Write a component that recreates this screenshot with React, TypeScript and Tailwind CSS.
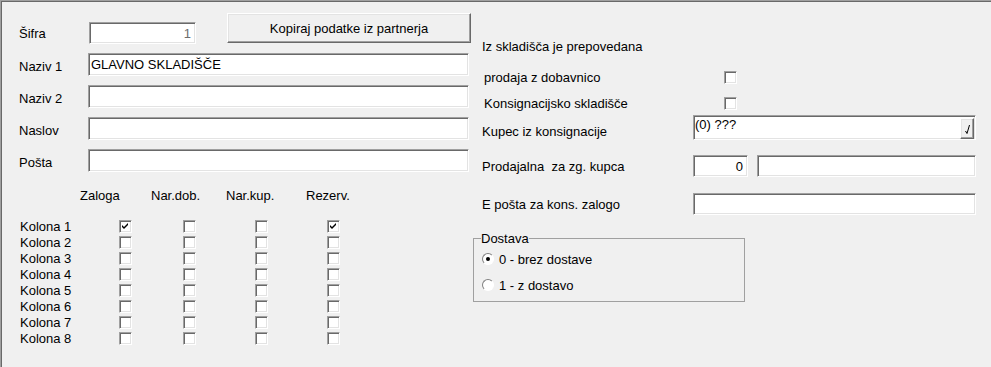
import type { ReactNode } from "react";

const sunken =
	"bg-white border border-t-[#a0a0a0] border-l-[#a0a0a0] border-b-white border-r-white shadow-[inset_1px_1px_0_#696969,inset_-1px_-1px_0_#e3e3e3]";
const raised =
	"bg-[#f0f0f0] border border-t-white border-l-white border-b-[#696969] border-r-[#696969] shadow-[inset_-1px_-1px_0_#a0a0a0,inset_1px_1px_0_#e3e3e3]";

const Check = ({ checked = false }: { checked?: boolean }) => (
	<span className={`${sunken} flex h-[13px] w-[13px] items-center justify-center`}>
		{checked ? (
			<svg width="9" height="9" viewBox="0 0 9 9">
				<path d="M1 3 L3 5 L7 1 L7 3 L3 7 L1 5 Z" fill="#000" />
			</svg>
		) : null}
	</span>
);

const Radio = ({ checked = false }: { checked?: boolean }) => (
	<span className="flex h-[12px] w-[12px] items-center justify-center rounded-full border border-t-[#808080] border-l-[#808080] border-b-white border-r-white bg-white">
		{checked ? <span className="h-[4px] w-[4px] rounded-full bg-black" /> : null}
	</span>
);

const Box = ({ className, children }: { className: string; children?: ReactNode }) => (
	<div className={`${sunken} flex items-center px-[2px] ${className}`}>{children}</div>
);

const kolone = [1, 2, 3, 4, 5, 6, 7, 8];

export default function App() {
	return (
		<div className="flex h-[367px] w-[991px] overflow-hidden border-t border-l border-[#a0a0a0] bg-[#f0f0f0] font-['Liberation_Sans',Arial,sans-serif] text-[13px] leading-[15px] text-black shadow-[inset_1px_1px_0_#696969]">
			{/* levi del */}
			<div className="flex w-[472px] shrink-0 flex-col pl-[18px] pt-[12px]">
				<div className="flex h-[31px]">
					<span className="mb-[3px] w-[70px] self-end">Šifra</span>
					<Box className="h-[22px] w-[107px] justify-end self-end pr-[4px] text-[#6d6d6d]">1</Box>
					<button className={`${raised} ml-[31px] h-[30px] w-[244px] text-center`}>
						Kopiraj podatke iz partnerja
					</button>
				</div>

				{[
					["Naziv 1", "GLAVNO SKLADIŠČE"],
					["Naziv 2", ""],
					["Naslov", ""],
					["Pošta", ""],
				].map(([label, value]) => (
					<div key={label} className="mt-[9px] flex items-center">
						<span className="w-[69px] pt-[3px]">{label}</span>
						<Box className="h-[23px] w-[381px]">{value}</Box>
					</div>
				))}

				<div className="mt-[16px] grid h-[15px] grid-cols-[71px_75px_80px_auto] pl-[61px]">
					<span>Zaloga</span>
					<span>Nar.dob.</span>
					<span>Nar.kup.</span>
					<span>Rezerv.</span>
				</div>

				<div className="mt-[15px] flex flex-col">
					{kolone.map((n) => (
						<div key={n} className="grid h-[16px] grid-cols-[100px_64px_72px_72px_13px] items-center">
							<span className="pl-px">Kolona {n}</span>
							<Check checked={n === 1} />
							<Check />
							<Check />
							<Check checked={n === 1} />
						</div>
					))}
				</div>
			</div>

			{/* desni del */}
			<div className="flex w-[504px] flex-col">
				<span className="mt-[38px] pl-[9px]">Iz skladišča je prepovedana</span>

				<div className="mt-[15px] grid h-[16px] grid-cols-[251px_13px] items-center">
					<span className="pl-[11px]">prodaja z dobavnico</span>
					<Check />
				</div>
				<div className="mt-[10px] grid h-[16px] grid-cols-[251px_13px] items-center">
					<span className="pl-[11px]">Konsignacijsko skladišče</span>
					<Check />
				</div>

				<div className="mt-[4px] flex h-[25px]">
					<span className="mb-px w-[220px] self-end pl-[9px]">Kupec iz konsignacije</span>
					<div className={`${sunken} flex w-[283px] items-start justify-between pl-[1px] pr-[1px] pt-[1px]`}>
						<span>(0) ???</span>
						<span className={`${raised} mt-px flex h-[21px] w-[14px] items-end justify-center pb-[4px]`}>
							<svg width="5" height="9" viewBox="0 0 5 9">
								<path d="M0.5 6 L2 8.5 L4.5 0" stroke="#000" strokeWidth="1" fill="none" />
							</svg>
						</span>
					</div>
				</div>

				<div className="mt-[15px] flex h-[22px] items-center">
					<span className="w-[220px] whitespace-pre pl-[9px]">Prodajalna  za zg. kupca</span>
					<Box className="h-[22px] w-[55px] justify-end pr-[4px]">0</Box>
					<Box className="ml-[9px] h-[22px] w-[219px]" />
				</div>

				<div className="mt-[16px] flex h-[22px] items-center">
					<span className="w-[220px] pl-[9px]">E pošta za kons. zalogo</span>
					<Box className="h-[22px] w-[283px]" />
				</div>

				<fieldset className="mt-[16px] w-[272px] border border-[#a0a0a0] px-[8px] pb-[8px]">
					<legend className="-ml-px px-0">Dostava</legend>
					<div className="mt-[5px] flex h-[16px] items-center">
						<Radio checked />
						<span className="ml-[5px]">0 - brez dostave</span>
					</div>
					<div className="mt-[10px] flex h-[16px] items-center">
						<Radio />
						<span className="ml-[5px]">1 - z dostavo</span>
					</div>
				</fieldset>
			</div>
		</div>
	);
}
